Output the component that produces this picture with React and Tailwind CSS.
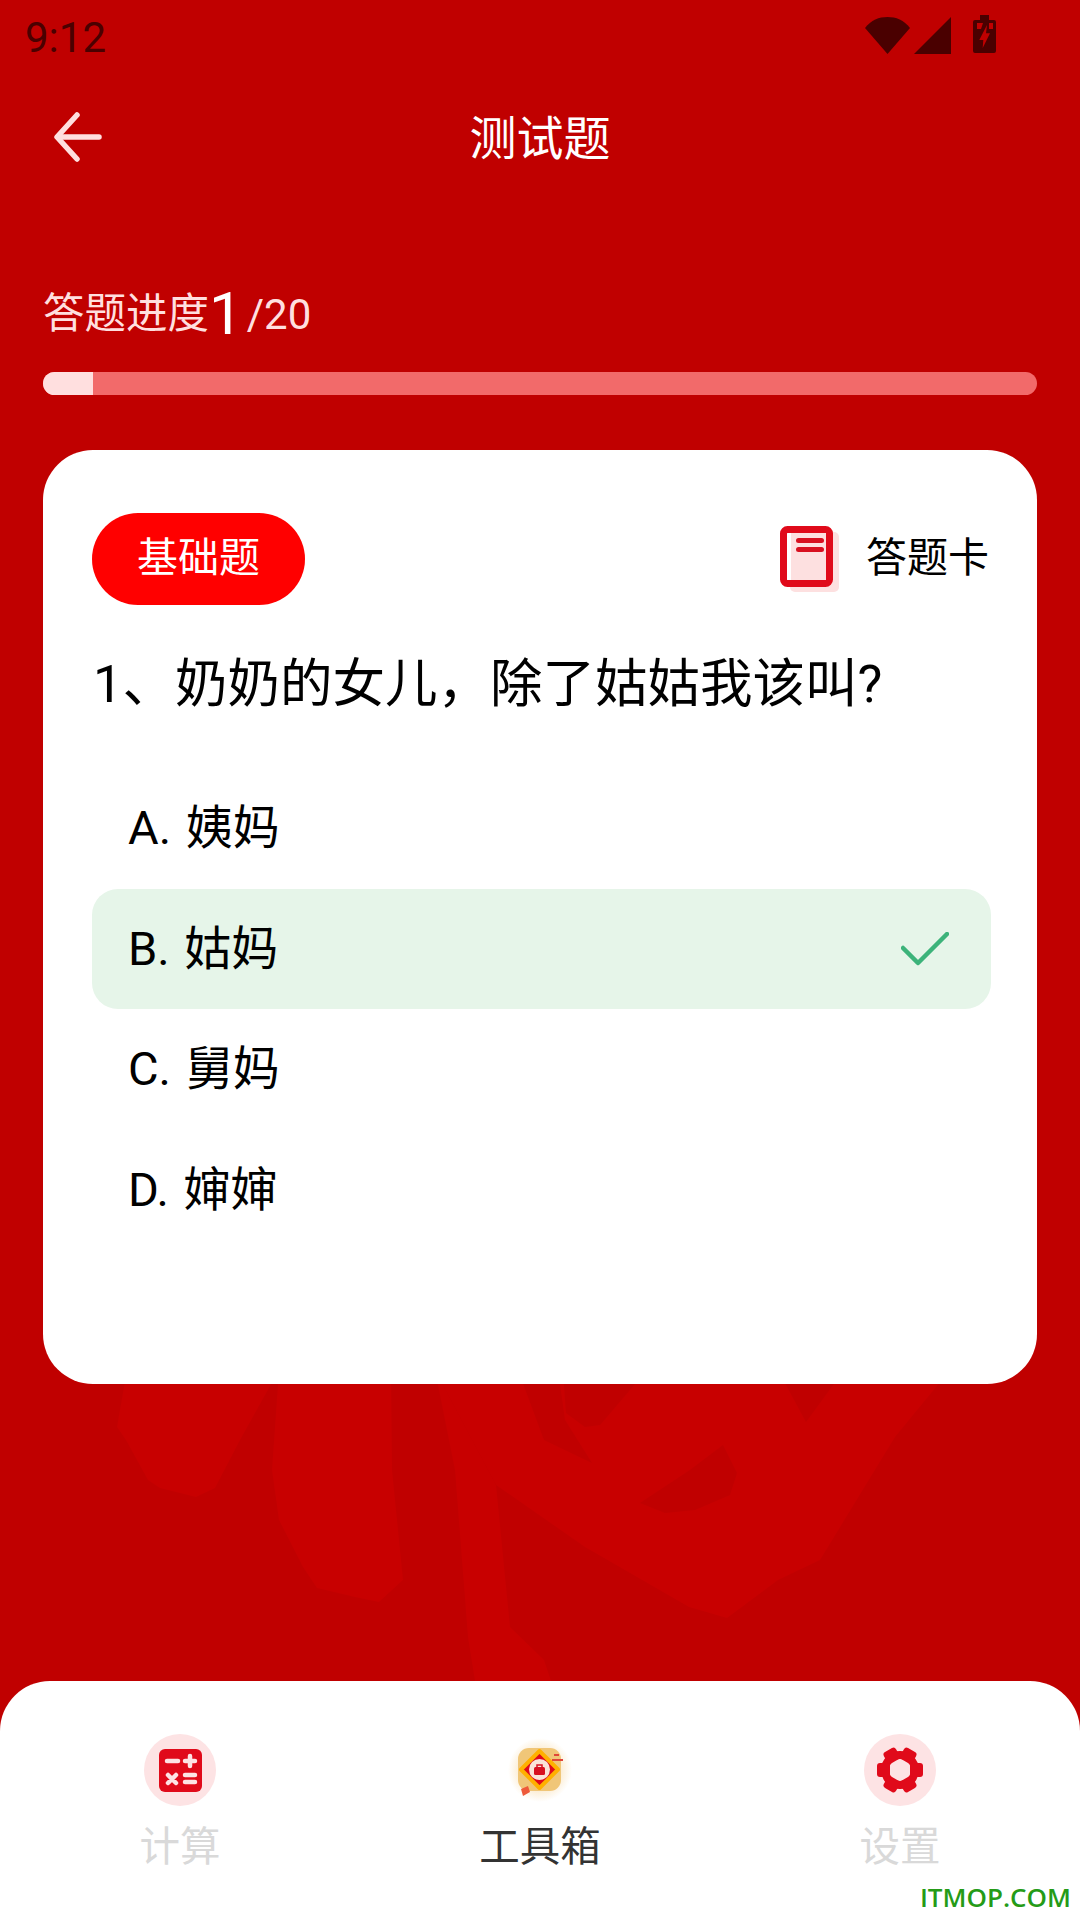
import React from "react";

const OPTIONS = [
  { label: "A. 姨妈" },
  { label: "B. 姑妈", picked: true },
  { label: "C. 舅妈" },
  { label: "D. 婶婶" },
];

const StatusIcons = () => (
  <svg width="132" height="39" viewBox="0 0 132 39" className="shrink-0">
    <path d="M22.5 39 L0 13 C6 5 14 2 22.5 2 C31 2 39 5 45 13 Z" fill="#4a0000" />
    <path d="M86 2 V39 H49 Z" fill="#4a0000" />
    <path d="M115 0 H124 V5 H129 Q131 5 131 7 V36 Q131 38 129 38 H110 Q108 38 108 36 V7 Q108 5 110 5 H115 Z" fill="#4a0000" />
    <path d="M112 8 H118 L116 14 H112 Z M124 8 H128 V14 H124 Z" fill="#c00000" />
    <path d="M122 10 L114.3 25 H118.3 L117.7 33 L125 18.3 H121 Z" fill="#c00000" />
  </svg>
);

const BackArrow = () => (
  <svg width="50" height="50" viewBox="0 0 50 50" fill="none" stroke="#ffdfdf" strokeWidth="5.5" strokeLinecap="round" strokeLinejoin="round">
    <path d="M24 3 L4 25 L24 47" />
    <path d="M5 25 H46" />
  </svg>
);

const BookIcon = () => (
  <svg width="60" height="67" viewBox="0 0 60 67">
    <rect x="10" y="6" width="49" height="60" rx="5" fill="#fde0e0" />
    <rect x="3.5" y="3.5" width="46" height="54" rx="4" fill="#fff" stroke="#e00a1a" strokeWidth="7" />
    <rect x="11" y="7" width="35" height="47" fill="#fde0e0" />
    <rect x="16" y="12" width="28" height="5" rx="2.5" fill="#d81020" />
    <rect x="16" y="21" width="28" height="5" rx="2.5" fill="#d81020" />
  </svg>
);

const CalcIcon = () => (
  <svg width="43" height="43" viewBox="0 0 43 43">
    <rect width="43" height="43" rx="6" fill="#e00a1a" />
    <g stroke="#fde3e4" strokeWidth="4.5" strokeLinecap="round">
      <path d="M8 12 H19" />
      <path d="M26 12 H36 M31 7 V17" />
      <path d="M9 26 L17 34 M17 26 L9 34" />
      <path d="M26 26 H36 M26 33 H36" />
    </g>
  </svg>
);

const ToolboxIcon = () => (
  <svg width="72" height="72" viewBox="0 0 72 72">
    <defs>
      <radialGradient id="toolGlow" cx="50%" cy="50%" r="50%">
        <stop offset="60%" stopColor="#f5c676" stopOpacity="0.35" />
        <stop offset="100%" stopColor="#f5c676" stopOpacity="0" />
      </radialGradient>
    </defs>
    <circle cx="36" cy="36" r="32" fill="url(#toolGlow)" />
    <rect x="14" y="14" width="43" height="43" rx="11" fill="#f0c678" />
    <path d="M35.5 17 L54 35.5 L35.5 54 L17 35.5 Z" fill="#e00a1a" stroke="#ffb000" strokeWidth="4" strokeLinejoin="round" />
    <circle cx="35.5" cy="35.5" r="10.5" fill="#fbe3d8" />
    <rect x="30" y="33" width="11" height="8" rx="1.5" fill="#d81020" />
    <path d="M33 33 V31 H38 V33" fill="none" stroke="#d81020" strokeWidth="1.5" />
    <path d="M48 26 H59 M50 21 H55" stroke="#e0453a" strokeWidth="1.8" />
    <path d="M17 55 L24 52 L26 58 L19 62 Z" fill="#ee5a3a" />
  </svg>
);

const GearIcon = () => (
  <svg width="48" height="48" viewBox="0 0 48 48">
    <circle cx="24" cy="24" r="15" fill="none" stroke="#e00a1a" strokeWidth="8" />
    <g fill="#e00a1a">
      <rect x="34" y="17" width="13" height="14" rx="3" />
      <rect x="34" y="17" width="13" height="14" rx="3" transform="rotate(60 24 24)" />
      <rect x="34" y="17" width="13" height="14" rx="3" transform="rotate(120 24 24)" />
      <rect x="34" y="17" width="13" height="14" rx="3" transform="rotate(180 24 24)" />
      <rect x="34" y="17" width="13" height="14" rx="3" transform="rotate(240 24 24)" />
      <rect x="34" y="17" width="13" height="14" rx="3" transform="rotate(300 24 24)" />
    </g>
  </svg>
);

// faint flower behind the card, only the lower part shows
const BackdropArt = () => (
  <svg className="absolute left-0 top-[1370px]" width="1080" height="320" viewBox="0 1370 1080 320">
    <g fill="#c80000">
      <path d="M127 1370 H279 L240 1440 L215 1488 L196 1497 L160 1488 L148 1480 L126 1440 L117 1427 Z" />
      <path d="M279 1370 H391 L392 1470 L403 1580 L379 1602 L355 1597 L317 1588 L303 1567 L279 1520 L272 1470 Z" />
      <path d="M435 1370 L455 1470 L468 1637 L475 1681 H551 L544 1660 L510 1627 L496 1485 Z" />
      <path d="M435 1370 H950 L895 1437 L820 1560 L778 1580 L727 1618 L689 1607 L585 1547 L496 1485 Z" />
    </g>
    <g fill="#c00000">
      <path d="M518 1370 L544 1440 L592 1463 L565 1420 L558 1370 Z" />
      <path d="M563 1370 L566 1413 L585 1427 L600 1425 L647 1370 Z" />
      <path d="M778 1370 H844 L806 1422 Z" />
      <path d="M723 1445 L737 1473 L730 1495 L695 1510 L665 1513 L640 1503 L690 1470 Z" />
    </g>
  </svg>
);

export default function App() {
  return (
    <div className="relative w-[1080px] h-[1920px] overflow-hidden bg-[#c00000] flex flex-col font-['Roboto','Noto_Sans_CJK_SC',sans-serif]">
      <BackdropArt />

      {/* Status bar */}
      <div className="relative h-[74px] flex items-center justify-between pl-[25px] pr-[83px]">
        <span className="text-[42px] text-[#4a0000]">9:12</span>
        <div className="-mt-[5px]">
          <StatusIcons />
        </div>
      </div>

      {/* Header */}
      <div className="relative h-[126px] grid grid-cols-[1fr_auto_1fr] items-center">
        <div className="pl-[53px]">
          <BackArrow />
        </div>
        <h1 className="pt-[4px] text-[47px] font-normal text-white">测试题</h1>
      </div>

      {/* Progress */}
      <div className="relative px-[43px] mt-[82px]">
        <div className="h-[60px] pt-[4px] flex items-center text-[41.5px] text-[#ffdfdf]">
          <span>答题进度</span>
          <span className="text-[60px] text-white mr-[4px]">1</span>
          <span className="text-[42px]">/20</span>
        </div>
        <div className="mt-[30px] h-[23px] rounded-full overflow-hidden bg-[#f26a6a]">
          <div className="h-full w-[50px] bg-[#ffdfdf]" />
        </div>
      </div>

      {/* Question card */}
      <div className="relative mt-[55px] mx-[43px] h-[934px] rounded-[50px] bg-white pt-[63px] pl-[49px] pr-[46px]">
        <div className="flex items-center justify-between h-[92px]">
          <div className="w-[213px] h-[92px] rounded-full bg-[#ff0000] flex items-center justify-center text-[41px] text-white">
            基础题
          </div>
          <div className="flex items-center gap-[26px] pr-[2px]">
            <BookIcon />
            <span className="text-[41px] text-black">答题卡</span>
          </div>
        </div>

        <p className="mt-[44px] mb-[49px] h-[70px] leading-[70px] pl-[1px] text-[52.5px] text-black whitespace-nowrap">
          1、奶奶的女儿，除了姑姑我该叫?
        </p>

        <div className="flex flex-col">
          {OPTIONS.map((o) => (
            <div
              key={o.label}
              className={`h-[120.5px] flex items-center justify-between pl-[36px] pr-[42px] rounded-[26px] text-[47px] text-black [word-spacing:3px] ${
                o.picked ? "bg-[#e6f5e9]" : ""
              }`}
            >
              <span>{o.label}</span>
              {o.picked && (
                <svg width="48" height="34" viewBox="0 0 48 34" fill="none" stroke="#3cb37a" strokeWidth="4.5" strokeLinecap="round" strokeLinejoin="round">
                  <path d="M2 16 L17 31 L46 2" />
                </svg>
              )}
            </div>
          ))}
        </div>
      </div>

      {/* Bottom nav */}
      <div className="relative mt-auto h-[239px] rounded-t-[50px] bg-white grid grid-cols-3 pt-[53px]">
        <div className="flex flex-col items-center">
          <div className="w-[72px] h-[72px] rounded-full bg-[#fde3e4] flex items-center justify-center">
            <CalcIcon />
          </div>
          <span className="mt-[11px] text-[40.5px] text-[#d9d9d9]">计算</span>
        </div>
        <div className="flex flex-col items-center">
          <ToolboxIcon />
          <span className="mt-[11px] text-[40.5px] text-[#333333]">工具箱</span>
        </div>
        <div className="flex flex-col items-center">
          <div className="w-[72px] h-[72px] rounded-full bg-[#fde3e4] flex items-center justify-center">
            <GearIcon />
          </div>
          <span className="mt-[11px] text-[40.5px] text-[#d9d9d9]">设置</span>
        </div>
      </div>

      {/* Watermark */}
      <span className="absolute right-[9px] bottom-[3px] text-[26px] font-semibold text-[#259b17] font-['Open_Sans',sans-serif]">
        ITMOP.COM
      </span>
    </div>
  );
}
